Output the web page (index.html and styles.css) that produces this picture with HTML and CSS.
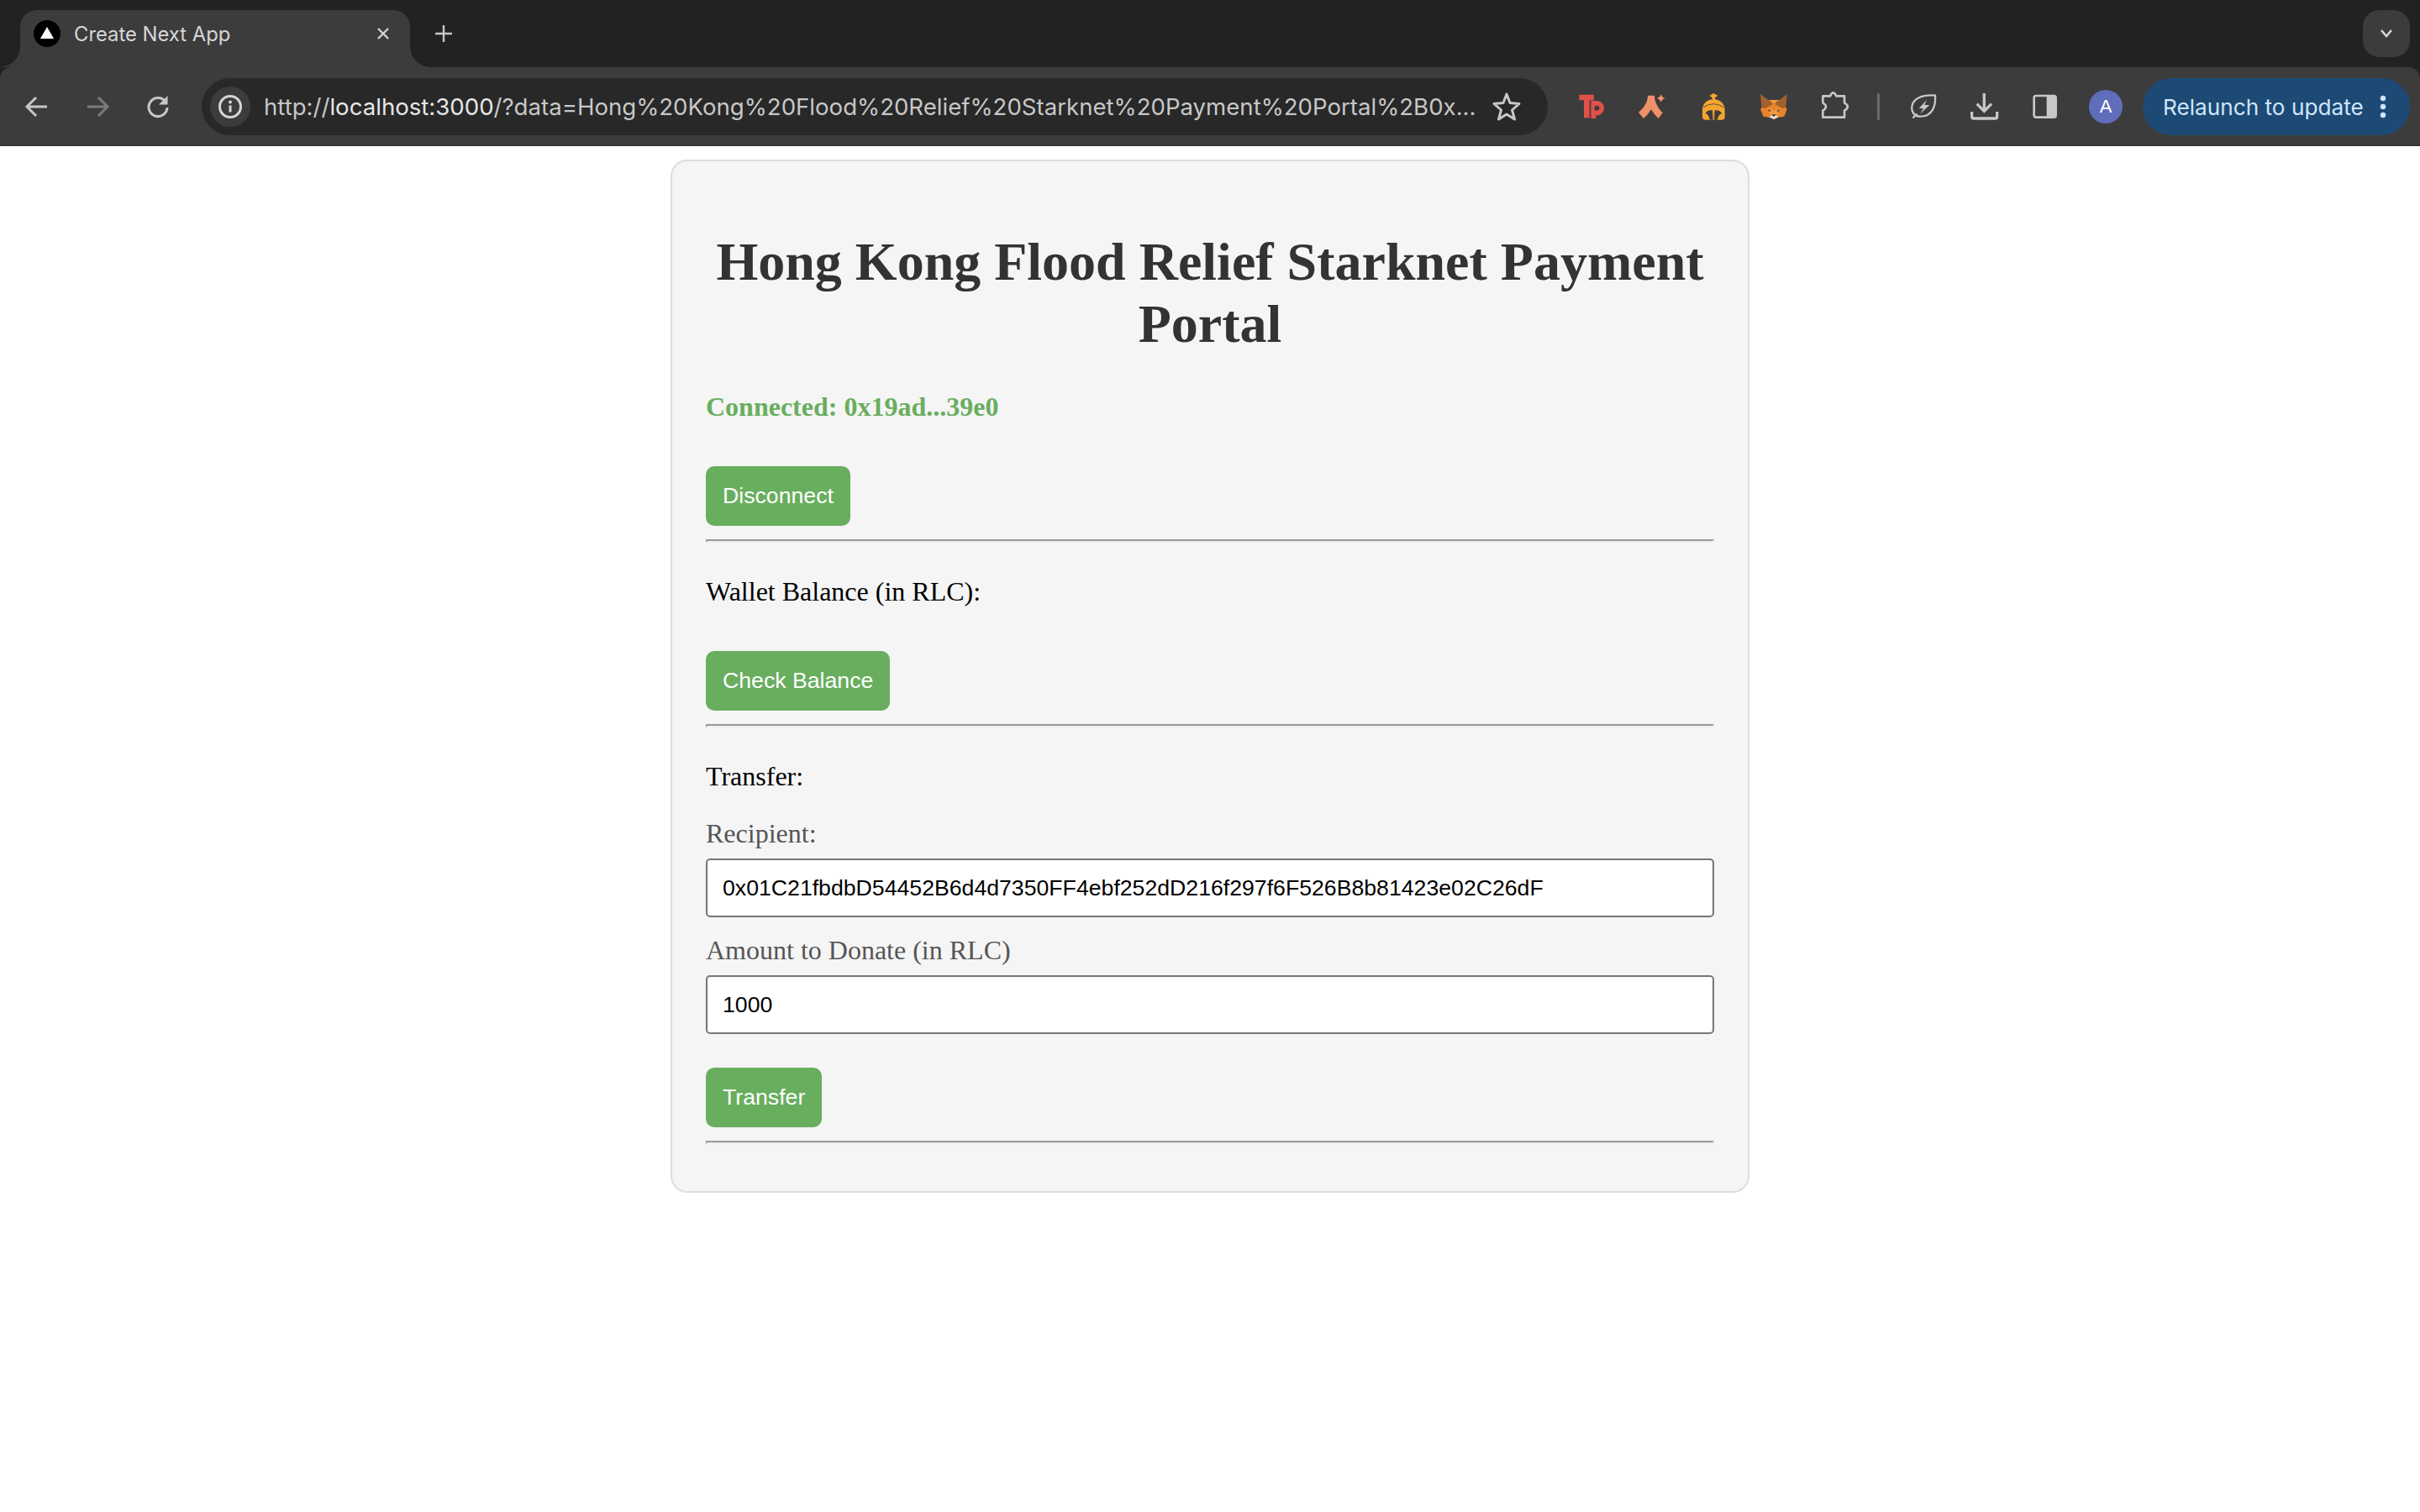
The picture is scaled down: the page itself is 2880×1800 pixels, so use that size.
FILE: index.html
```html
<!DOCTYPE html>
<html lang="en">
<head>
  <meta charset="UTF-8">
  <title>Create Next App</title>
  <link rel="stylesheet" href="styles.css">
</head>
<body>

  <header class="browser">
    <div class="tabstrip">
      <div class="tab">
        <svg class="favicon" viewBox="0 0 32 32"><circle cx="16" cy="16" r="16" fill="#000"/><path d="M16 8 L24 22 H8 Z" fill="#fff"/></svg>
        <span class="tab-title">Create Next App</span>
        <svg class="tab-close" viewBox="0 0 16 16"><path d="M2 2 L14 14 M14 2 L2 14" stroke="#d6d6d6" stroke-width="2.4" fill="none"/></svg>
      </div>
      <button class="new-tab">
        <svg viewBox="0 0 22 22" width="22" height="22"><path d="M11 1 V21 M1 11 H21" stroke="#c7c7c7" stroke-width="2.4" fill="none"/></svg>
      </button>
      <button class="tab-search">
        <svg viewBox="0 0 16 12" width="16" height="12"><path d="M2 2 L8 9 L14 2" stroke="#d6d6d6" stroke-width="2.6" fill="none"/></svg>
      </button>
    </div>

    <div class="toolbar">
      <button class="tool">
        <svg viewBox="0 0 40 40"><path d="M32 20 H9 M19 9 L8 20 L19 31" stroke="#c7c7c7" stroke-width="3" fill="none"/></svg>
      </button>
      <button class="tool">
        <svg viewBox="0 0 40 40"><path d="M8 20 H31 M21 9 L32 20 L21 31" stroke="#7a7a7a" stroke-width="3" fill="none"/></svg>
      </button>
      <button class="tool">
        <svg viewBox="0 0 40 40"><path d="M29.5 15 A11 11 0 1 0 31 21" stroke="#c7c7c7" stroke-width="3" fill="none"/><path d="M31.5 7 V17.5 H21 Z" fill="#c7c7c7"/></svg>
      </button>

      <div class="omnibox">
        <span class="site-info">
          <svg viewBox="0 0 32 32" width="32" height="32"><circle cx="16" cy="16" r="12.5" stroke="#d6d6d6" stroke-width="3" fill="none"/><circle cx="16" cy="10.5" r="1.9" fill="#d6d6d6"/><path d="M16 14.5 V22.5" stroke="#d6d6d6" stroke-width="3"/></svg>
        </span>
        <span class="url"><span class="url-dim">http://</span>localhost:3000<span class="url-dim">/?data=Hong%20Kong%20Flood%20Relief%20Starknet%20Payment%20Portal%2B0x...</span></span>
        <svg class="star" viewBox="0 0 40 40"><path d="M20 5 L24 15.5 L35 16.5 L26.5 24 L29.5 35 L20 29 L10.5 35 L13.5 24 L5 16.5 L16 15.5 Z" stroke="#c7c7c7" stroke-width="3" stroke-linejoin="round" fill="none"/></svg>
      </div>

      <div class="extensions">
        <button class="tool">
          <svg viewBox="12 30 120 120"><path d="M28 47 H80 V67 H65 V130 H45 V67 H28 Z" fill="#e2504a"/><path fill-rule="evenodd" d="M70 69 H91 A26 26 0 0 1 91 121 H88 V132 H70 Z M91 86 A9 9 0 1 0 91 104 A9 9 0 1 0 91 86 Z" fill="#e2504a"/></svg>
        </button>
        <button class="tool">
          <svg viewBox="228 30 120 120"><path d="M273 50 H297 C297 75 310 95 326 112 L311 132 Q295 118 285 100 Q275 118 258 132 L240 110 C258 95 273 75 273 50 Z" fill="#f0906a"/><path d="M320 45 Q323 57 335 60 Q323 63 320 75 Q317 63 305 60 Q317 57 320 45 Z" fill="#f0906a"/></svg>
        </button>
        <button class="tool">
          <svg viewBox="441 30 120 120"><path d="M505 42 L520 51 L510 58 V63 H500 V58 L490 51 Z" fill="#f5a52e"/><path d="M465 102 C465 78 485 63 505 63 C525 63 545 78 545 102 V125 Q545 137 533 137 H477 Q465 137 465 125 Z" fill="#f5a52e"/><path d="M476 113 Q484 100 501 103 L503 137 H491 Q491 122 476 113 Z" fill="#3c3c3c"/><path d="M534 113 Q526 100 509 103 L507 137 H519 Q519 122 534 113 Z" fill="#3c3c3c"/><path d="M469 92 Q505 68 541 92" stroke="#3c3c3c" stroke-width="2.5" fill="none"/></svg>
        </button>
        <button class="tool">
          <svg viewBox="657 30 120 120"><polygon points="690,75 750,75 767,100 757,125 735,128 720,135 705,128 683,125 672,100" fill="#e8842c"/><polygon points="672,45 718,80 690,96 676,92" fill="#a4602c"/><polygon points="767,45 722,80 750,96 763,92" fill="#a4602c"/><polygon points="700,66 720,80 740,66" fill="#f19a45"/><polygon points="695,92 720,106 745,92 735,116 720,120 705,116" fill="#f19a45"/><polygon points="702,126 720,118 738,126 720,135" fill="#e6dcd2"/><polygon points="712,118 728,118 720,126" fill="#2f2a26"/><polygon points="698,100 710,104 704,108" fill="#3d2a1c"/><polygon points="742,100 730,104 736,108" fill="#3d2a1c"/></svg>
        </button>
        <button class="tool">
          <svg viewBox="36 30 120 120"><path d="M58 52 H84 Q95 28 106 52 H135 V76 Q158 90 135 104 V128 H58 V104 Q80 90 58 76 Z" stroke="#c7c7c7" stroke-width="8" stroke-linejoin="round" fill="none"/></svg>
        </button>
      </div>

      <span class="tool-divider"></span>

      <button class="tool">
        <svg viewBox="363 30 120 120"><path d="M462 50 C465 90 450 125 410 125 C385 125 375 105 380 85 C385 60 420 45 462 50 Z M398 116 L382 130" stroke="#c7c7c7" stroke-width="7" fill="none"/><path d="M432 65 L404 96 H420 L408 116 L442 84 H424 Z" fill="#c7c7c7"/></svg>
      </button>
      <button class="tool">
        <svg viewBox="579 30 120 120"><path d="M637 42 V104 M611 80 L637 106 L663 80" stroke="#c7c7c7" stroke-width="10" fill="none"/><path d="M593 108 V125 Q593 132 600 132 H676 Q683 132 683 125 V108" stroke="#c7c7c7" stroke-width="10" fill="none"/></svg>
      </button>
      <button class="tool">
        <svg viewBox="793 30 120 120"><rect x="813" y="51" width="78" height="77" rx="7" stroke="#c7c7c7" stroke-width="8" fill="none"/><rect x="858" y="51" width="33" height="77" fill="#c7c7c7"/></svg>
      </button>
      <button class="tool">
        <span class="avatar">A</span>
      </button>

      <div class="relaunch">
        <span>Relaunch to update</span>
        <svg viewBox="0 0 8 28" width="8" height="28"><circle cx="4" cy="4" r="3.2" fill="#cfe6fc"/><circle cx="4" cy="14" r="3.2" fill="#cfe6fc"/><circle cx="4" cy="24" r="3.2" fill="#cfe6fc"/></svg>
      </div>
    </div>
  </header>

  <main class="card">
    <h1>Hong Kong Flood Relief Starknet Payment Portal</h1>

    <p class="status">Connected: 0x19ad...39e0</p>
    <button class="action">Disconnect</button>
    <hr>

    <p class="section-title">Wallet Balance (in RLC):</p>
    <button class="action">Check Balance</button>
    <hr>

    <p class="section-title form-title">Transfer:</p>
    <label class="field-label" for="recipient">Recipient:</label>
    <input class="field" id="recipient" type="text" value="0x01C21fbdbD54452B6d4d7350FF4ebf252dD216f297f6F526B8b81423e02C26dF">
    <label class="field-label" for="amount">Amount to Donate (in RLC)</label>
    <input class="field field-last" id="amount" type="text" value="1000">
    <button class="action">Transfer</button>
    <hr>
  </main>

</body>
</html>
```

FILE: styles.css
```css
body {
  margin: 0;
  background: #fff;
  font-family: "Liberation Serif", serif;
}

button {
  padding: 0;
  border: none;
  background: none;
}

/* browser chrome */

.browser {
  background: #212322;
  font-family: Inter, "Liberation Sans", sans-serif;
}

.tabstrip {
  display: flex;
  height: 80px;
  box-sizing: border-box;
  padding: 12px 12px 0 24px;
}

.tab {
  position: relative;
  display: flex;
  align-items: center;
  width: 464px;
  height: 68px;
  box-sizing: border-box;
  padding: 0 24px 12px 16px;
  background: #3c3c3c;
  border-radius: 20px 20px 0 0;
}

.tab::before,
.tab::after {
  content: "";
  position: absolute;
  bottom: 0;
  width: 24px;
  height: 24px;
}

.tab::before {
  left: -24px;
  background: radial-gradient(circle at 0 0, transparent 23.5px, #3c3c3c 24px);
}

.tab::after {
  right: -24px;
  background: radial-gradient(circle at 100% 0, transparent 23.5px, #3c3c3c 24px);
}

.favicon {
  width: 32px;
  height: 32px;
}

.tab-title {
  flex: 1;
  margin-left: 16px;
  font-size: 23.8px;
  color: #d6d6d6;
}

.tab-close {
  width: 16px;
  height: 16px;
}

.new-tab {
  display: flex;
  align-items: center;
  justify-content: center;
  width: 80px;
  height: 56px;
}

.tab-search {
  display: flex;
  align-items: center;
  justify-content: center;
  width: 56px;
  height: 56px;
  margin-left: auto;
  background: #3c3c3c;
  border-radius: 20px;
}

.toolbar {
  display: flex;
  align-items: center;
  height: 94px;
  box-sizing: border-box;
  padding: 2px 12px 0 8px;
  background: #3c3c3c;
  border-bottom: 2px solid #363636;
  border-radius: 14px 14px 0 0;
}

.tool {
  display: flex;
  align-items: center;
  justify-content: center;
  width: 72px;
  height: 68px;
  flex: none;
}

.tool svg {
  width: 40px;
  height: 40px;
}

.omnibox {
  display: flex;
  align-items: center;
  width: 1602px;
  height: 68px;
  box-sizing: border-box;
  margin: 0 16px;
  padding: 0 29px 0 10px;
  background: #282828;
  border-radius: 34px;
}

.site-info {
  display: flex;
  align-items: center;
  justify-content: center;
  width: 48px;
  height: 48px;
  flex: none;
  background: #3c3c3c;
  border-radius: 50%;
}

.url {
  flex: 1;
  margin-left: 16px;
  font-size: 27.6px;
  white-space: nowrap;
  overflow: hidden;
  color: #e6e6e6;
}

.url-dim {
  color: #c7c7c7;
}

.star {
  width: 40px;
  height: 40px;
  flex: none;
}

.extensions {
  display: flex;
}

.tool-divider {
  width: 3px;
  height: 32px;
  flex: none;
  margin: 0 17px 0 16px;
  background: #6b6b6b;
  border-radius: 2px;
}

.avatar {
  display: flex;
  align-items: center;
  justify-content: center;
  width: 40px;
  height: 40px;
  background: #5f6dba;
  border-radius: 50%;
  font-size: 22px;
  color: #fff;
}

.relaunch {
  display: flex;
  align-items: center;
  justify-content: space-between;
  width: 318px;
  height: 68px;
  box-sizing: border-box;
  margin-left: 8px;
  padding: 0 28px 0 24px;
  background: #1d4a75;
  border-radius: 34px;
  font-size: 26.2px;
  color: #cfe6fc;
  white-space: nowrap;
}

/* page */

.card {
  width: 1284px;
  box-sizing: border-box;
  margin: 16px auto 0;
  padding: 40px;
  background: #f5f5f5;
  border: 2px solid #ddd;
  border-radius: 20px;
}

h1 {
  margin: 43px 0;
  font-size: 64px;
  line-height: 74px;
  text-align: center;
  color: #333;
}

.status {
  margin: 0 0 52px;
  font-size: 32px;
  font-weight: bold;
  color: #69ae5f;
}

.section-title {
  margin: 0 0 52px;
  font-size: 32px;
  color: #000;
}

.form-title {
  margin-bottom: 31px;
}

.action {
  display: block;
  margin: 0 0 16px;
  padding: 20px;
  background: #69ae5f;
  border-radius: 10px;
  font-family: "Liberation Sans", sans-serif;
  font-size: 26.67px;
  color: #fff;
}

hr {
  height: 4px;
  box-sizing: border-box;
  margin: 0 0 40px;
  border: 2px solid;
  border-color: #999 #eee #eee #999;
}

main hr:last-child {
  margin-bottom: 16px;
}

.field-label {
  display: block;
  margin-bottom: 11px;
  font-size: 32px;
  color: #555;
}

.field {
  display: block;
  width: 100%;
  height: 70px;
  box-sizing: border-box;
  margin-bottom: 21px;
  padding: 0 18px;
  background: #fff;
  border: 2px solid #767676;
  border-radius: 5px;
  font-family: "Liberation Sans", sans-serif;
  font-size: 26.67px;
  color: #000;
}

.field-last {
  margin-bottom: 40px;
}
```
